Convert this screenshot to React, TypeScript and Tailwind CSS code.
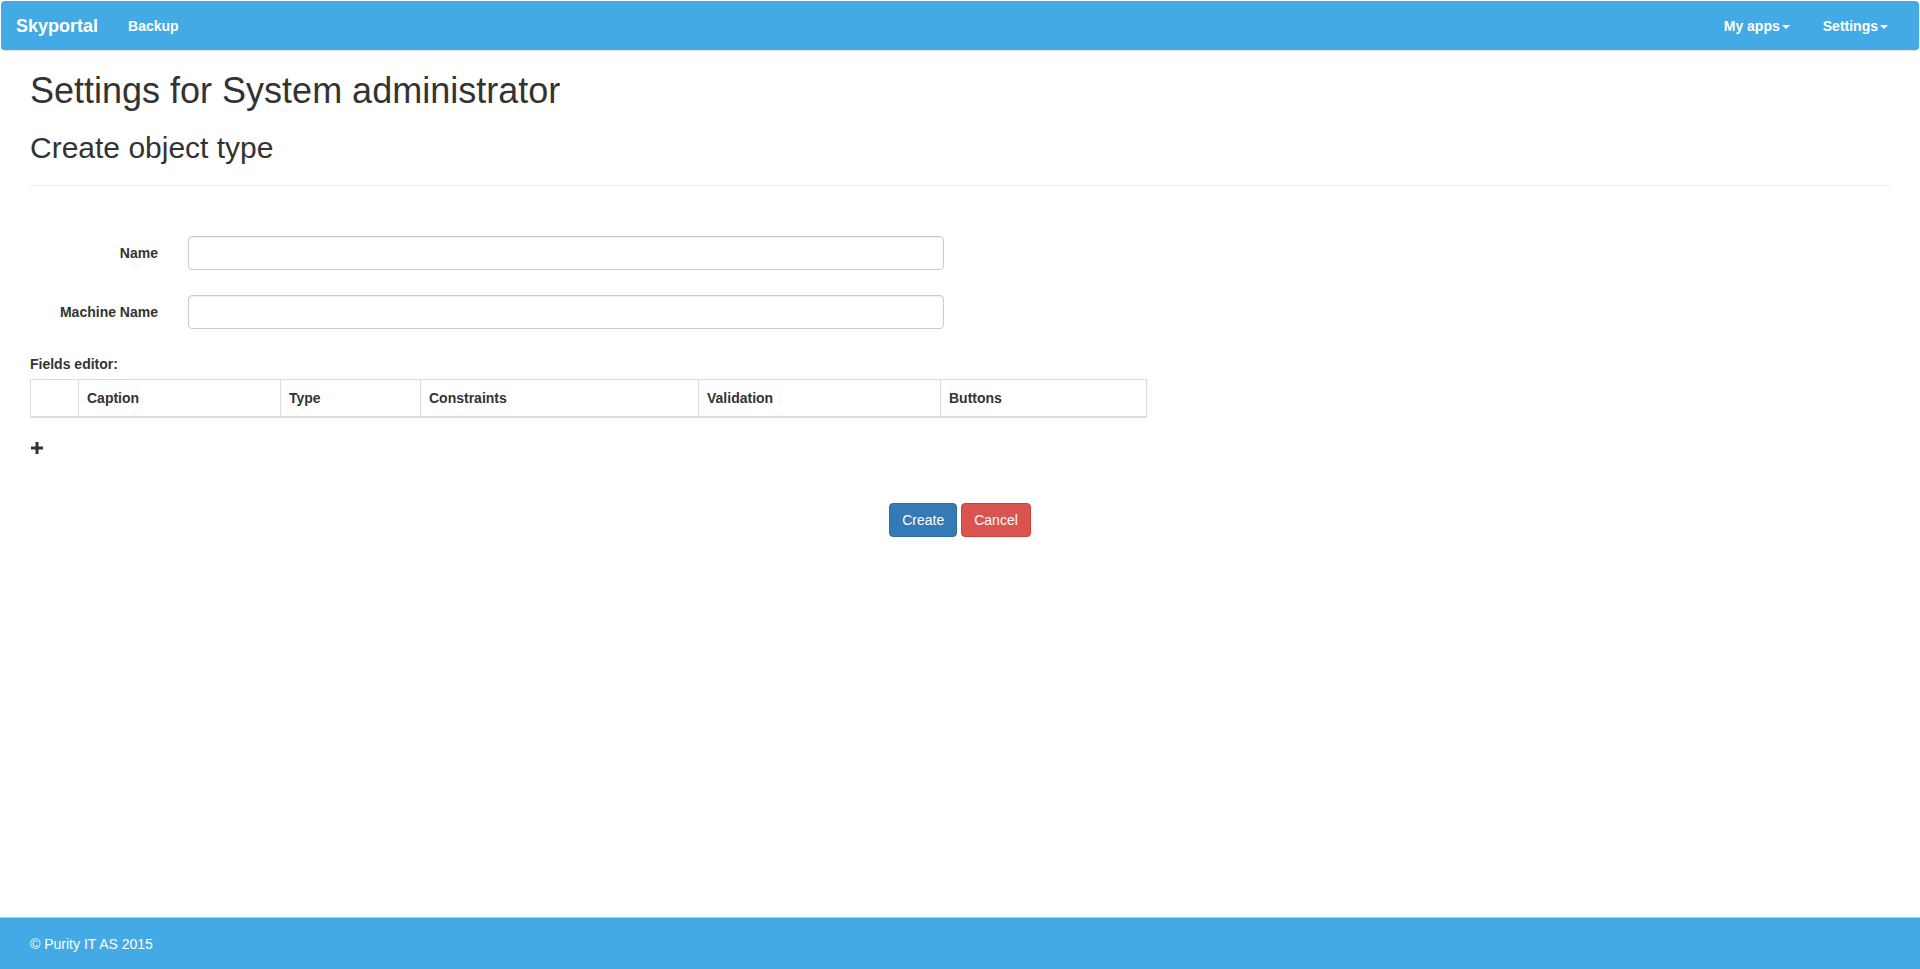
import React from "react";

function Caret() {
  return (
    <span className="ml-[2px] inline-block h-0 w-0 border-x-[4px] border-t-[4px] border-x-transparent border-t-white align-middle" />
  );
}

export default function App() {
  const cols: { label: string; w: string }[] = [
    { label: "", w: "w-[48px]" },
    { label: "Caption", w: "w-[202px]" },
    { label: "Type", w: "w-[140px]" },
    { label: "Constraints", w: "w-[278px]" },
    { label: "Validation", w: "w-[242px]" },
    { label: "Buttons", w: "w-[206px]" },
  ];
  return (
    <div
      className="flex h-screen flex-col overflow-hidden bg-white text-[14px] text-[#333]"
      style={{ fontFamily: '"Liberation Sans", Arial, Helvetica, sans-serif' }}
    >
      {/* Navbar */}
      <nav className="mx-px mt-px flex h-[49px] shrink-0 items-start justify-between rounded-[4px] bg-[#43aae6] shadow-[0_1px_1px_rgba(0,0,0,0.12)]">
        <div className="flex items-start">
          <a className="block px-[15px] pt-[15px] text-[18px] font-bold leading-[20px] text-white">Skyportal</a>
          <a className="block px-[15px] pt-[15px] text-[14px] font-bold leading-[20px] text-white">Backup</a>
        </div>
        <div className="mr-[16px] flex items-start gap-[3px]">
          <a className="block px-[15px] pt-[15px] text-[14px] font-bold leading-[20px] text-white">
            My apps<Caret />
          </a>
          <a className="block px-[15px] pt-[15px] text-[14px] font-bold leading-[20px] text-white">
            Settings<Caret />
          </a>
        </div>
      </nav>

      {/* Main */}
      <main className="px-[30px]">
        <h1 className="mt-[21px] text-[36px] font-normal leading-[1.1]">Settings for System administrator</h1>
        <div className="border-b border-[#eee] pb-[21px]">
          <h2 className="mt-[20px] text-[30px] font-normal leading-[1.1]">Create object type</h2>
        </div>

        <form className="mt-[50px]" onSubmit={(e) => e.preventDefault()}>
          <div className="flex items-center">
            <label className="w-[128px] text-right text-[14px] font-bold leading-[20px]">Name</label>
            <input
              type="text"
              className="ml-[30px] h-[34px] w-[756px] rounded-[4px] border border-[#ccc] px-3 shadow-[inset_0_1px_1px_rgba(0,0,0,0.075)] outline-none"
            />
          </div>
          <div className="mt-[25px] flex items-center">
            <label className="w-[128px] text-right text-[14px] font-bold leading-[20px]">Machine Name</label>
            <input
              type="text"
              className="ml-[30px] h-[34px] w-[756px] rounded-[4px] border border-[#ccc] px-3 shadow-[inset_0_1px_1px_rgba(0,0,0,0.075)] outline-none"
            />
          </div>

          <div className="mt-[25px] text-[14px] font-bold leading-[20px]">Fields editor:</div>
          <table className="mt-[5px] w-[1116px] table-fixed border-collapse border border-[#ddd]">
            <thead>
              <tr>
                {cols.map((c, i) => (
                  <th
                    key={i}
                    className={`${c.w} border border-b-2 border-[#ddd] p-[8px] text-left text-[14px] font-bold leading-[20px]`}
                  >
                    {c.label}
                  </th>
                ))}
              </tr>
            </thead>
          </table>

          <div className="mt-[24px] h-[12px] w-[12px] pl-px">
            <svg width="12" height="12" viewBox="0 0 12 12">
              <rect x="0" y="4.5" width="12" height="3" fill="#333" />
              <rect x="4.5" y="0" width="3" height="12" fill="#333" />
            </svg>
          </div>

          <div className="mt-[49px] flex justify-center gap-[4px]">
            <button
              type="button"
              className="h-[34px] rounded-[4px] border border-[#2e6da4] bg-[#337ab7] px-[12px] text-[14px] leading-[20px] text-white"
            >
              Create
            </button>
            <button
              type="button"
              className="h-[34px] rounded-[4px] border border-[#d43f3a] bg-[#d9534f] px-[12px] text-[14px] leading-[20px] text-white"
            >
              Cancel
            </button>
          </div>
        </form>
      </main>

      {/* Footer */}
      <footer className="mt-auto shrink-0 border-t border-[#c8c8c8] bg-[#43aae6]">
        <div className="flex h-[51px] items-center px-[30px] text-[14px] leading-[20px] text-white">© Purity IT AS 2015</div>
      </footer>
    </div>
  );
}
